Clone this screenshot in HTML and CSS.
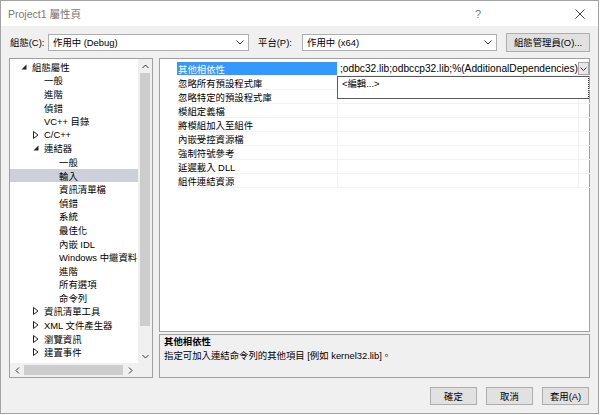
FILE: index.html
```html
<!DOCTYPE html>
<html>
<head>
<meta charset="utf-8">
<link rel="stylesheet" href="styles.css">
</head>
<body>
<div class="window">
  <div class="titlebar">
    <span class="title">Project1 屬性頁</span>
    <span class="tb-btn help">?</span>
    <span class="tb-btn close"><svg width="10" height="10" viewBox="0 0 10 10"><path d="M0.5 0.5 L9.5 9.5 M9.5 0.5 L0.5 9.5" stroke="#444" stroke-width="1" fill="none"/></svg></span>
  </div>
  <div class="content">
    <div class="toprow">
      <span class="lbl lbl1">組態(C):</span>
      <div class="combo combo1"><span>作用中 (Debug)</span><svg class="chev" width="8" height="5" viewBox="0 0 8 5"><path d="M0.5 0.5 L4 4 L7.5 0.5" stroke="#333" fill="none"/></svg></div>
      <span class="lbl lbl2">平台(P):</span>
      <div class="combo combo2"><span>作用中 (x64)</span><svg class="chev" width="8" height="5" viewBox="0 0 8 5"><path d="M0.5 0.5 L4 4 L7.5 0.5" stroke="#333" fill="none"/></svg></div>
      <button class="btn cfgbtn">組態管理員(O)...</button>
    </div>
    <div class="main">
      <div class="tree">
        <div class="tree-list">
          <div class="trow l0"><span class="arr"><svg width="6" height="6" viewBox="0 0 6 6"><path d="M5.5 0.5 L5.5 5.5 L0.5 5.5 Z" fill="#222"/></svg></span><span>組態屬性</span></div>
          <div class="trow l1"><span class="arr"></span><span>一般</span></div>
          <div class="trow l1"><span class="arr"></span><span>進階</span></div>
          <div class="trow l1"><span class="arr"></span><span>偵錯</span></div>
          <div class="trow l1"><span class="arr"></span><span>VC++ 目錄</span></div>
          <div class="trow l1c"><span class="arr"><svg width="6" height="8" viewBox="0 0 6 8"><path d="M0.5 0.5 L5 4 L0.5 7.5 Z" fill="none" stroke="#222"/></svg></span><span>C/C++</span></div>
          <div class="trow l1c"><span class="arr"><svg width="6" height="6" viewBox="0 0 6 6"><path d="M5.5 0.5 L5.5 5.5 L0.5 5.5 Z" fill="#222"/></svg></span><span>連結器</span></div>
          <div class="trow l2"><span class="arr"></span><span>一般</span></div>
          <div class="trow l2 sel"><span class="arr"></span><span>輸入</span></div>
          <div class="trow l2"><span class="arr"></span><span>資訊清單檔</span></div>
          <div class="trow l2"><span class="arr"></span><span>偵錯</span></div>
          <div class="trow l2"><span class="arr"></span><span>系統</span></div>
          <div class="trow l2"><span class="arr"></span><span>最佳化</span></div>
          <div class="trow l2"><span class="arr"></span><span>內嵌 IDL</span></div>
          <div class="trow l2"><span class="arr"></span><span>Windows 中繼資料</span></div>
          <div class="trow l2"><span class="arr"></span><span>進階</span></div>
          <div class="trow l2"><span class="arr"></span><span>所有選項</span></div>
          <div class="trow l2"><span class="arr"></span><span>命令列</span></div>
          <div class="trow l1c"><span class="arr"><svg width="6" height="8" viewBox="0 0 6 8"><path d="M0.5 0.5 L5 4 L0.5 7.5 Z" fill="none" stroke="#222"/></svg></span><span>資訊清單工具</span></div>
          <div class="trow l1c"><span class="arr"><svg width="6" height="8" viewBox="0 0 6 8"><path d="M0.5 0.5 L5 4 L0.5 7.5 Z" fill="none" stroke="#222"/></svg></span><span>XML 文件產生器</span></div>
          <div class="trow l1c"><span class="arr"><svg width="6" height="8" viewBox="0 0 6 8"><path d="M0.5 0.5 L5 4 L0.5 7.5 Z" fill="none" stroke="#222"/></svg></span><span>瀏覽資訊</span></div>
          <div class="trow l1c"><span class="arr"><svg width="6" height="8" viewBox="0 0 6 8"><path d="M0.5 0.5 L5 4 L0.5 7.5 Z" fill="none" stroke="#222"/></svg></span><span>建置事件</span></div>
        </div>
        <div class="vscroll">
          <div class="sarrow"><svg width="7" height="5" viewBox="0 0 7 5"><path d="M0.5 4 L3.5 1 L6.5 4" stroke="#333" fill="none"/></svg></div>
          <div class="vthumb"></div>
          <div class="vtrack"></div>
          <div class="sarrow"><svg width="7" height="5" viewBox="0 0 7 5"><path d="M0.5 1 L3.5 4 L6.5 1" stroke="#333" fill="none"/></svg></div>
        </div>
        <div class="hscroll">
          <div class="harrow"><svg width="5" height="7" viewBox="0 0 5 7"><path d="M4 0.5 L1 3.5 L4 6.5" stroke="#333" fill="none"/></svg></div>
          <div class="hthumb"></div>
          <div class="harrow"><svg width="5" height="7" viewBox="0 0 5 7"><path d="M1 0.5 L4 3.5 L1 6.5" stroke="#333" fill="none"/></svg></div>
        </div>
        <div class="corner"></div>
      </div>
      <div class="rightcol">
        <div class="grid">
          <div class="gutter"></div>
          <div class="rows">
            <div class="grow"><div class="gname gsel">其他相依性</div><div class="gval gedit">;odbc32.lib;odbccp32.lib;%(AdditionalDependencies)</div><div class="gend"><span class="ddbtn"><svg width="7" height="4" viewBox="0 0 7 4"><path d="M0.5 0.5 L3.5 3.5 L6.5 0.5" stroke="#333" fill="none"/></svg></span></div></div>
            <div class="grow"><div class="gname">忽略所有預設程式庫</div><div class="gval"></div><div class="gend"></div></div>
            <div class="grow"><div class="gname">忽略特定的預設程式庫</div><div class="gval"></div><div class="gend"></div></div>
            <div class="grow"><div class="gname">模組定義檔</div><div class="gval"></div><div class="gend"></div></div>
            <div class="grow"><div class="gname">將模組加入至組件</div><div class="gval"></div><div class="gend"></div></div>
            <div class="grow"><div class="gname">內嵌受控資源檔</div><div class="gval"></div><div class="gend"></div></div>
            <div class="grow"><div class="gname">強制符號參考</div><div class="gval"></div><div class="gend"></div></div>
            <div class="grow"><div class="gname">延遲載入 DLL</div><div class="gval"></div><div class="gend"></div></div>
            <div class="grow"><div class="gname">組件連結資源</div><div class="gval"></div><div class="gend"></div></div>
          </div>
          <div class="popup"><span>&lt;編輯...&gt;</span></div>
        </div>
        <div class="desc">
          <div class="desc-title">其他相依性</div>
          <div class="desc-text">指定可加入連結命令列的其他項目 [例如 kernel32.lib]。</div>
        </div>
      </div>
    </div>
    <div class="buttons">
      <button class="btn dbtn">確定</button>
      <button class="btn dbtn">取消</button>
      <button class="btn dbtn">套用(A)</button>
    </div>
  </div>
</div>
</body>
</html>
```
FILE: styles.css
```css
* { box-sizing: border-box; }
html, body { margin: 0; padding: 0; }
body {
  width: 600px;
  height: 415px;
  background: #ffffff;
  font-family: "Liberation Sans", "Noto Sans CJK TC", sans-serif;
  font-size: 9.4px;
  color: #000;
  overflow: hidden;
}
.window {
  width: 599px;
  height: 414px;
  border: 1px solid #a3a3a3;
  background: #f0f0f0;
  display: flex;
  flex-direction: column;
}
.titlebar {
  height: 25px;
  background: #ffffff;
  display: flex;
  align-items: center;
  padding-left: 7px;
  padding-right: 3px;
}
.title {
  font-size: 10.5px;
  color: #777777;
  flex: 1;
}
.tb-btn {
  width: 30px;
  display: flex;
  justify-content: center;
  align-items: center;
  color: #777;
  font-size: 11px;
}
.help { margin-right: 72px; }
.content {
  flex: 1;
  padding: 0 7px 0 8px;
  display: flex;
  flex-direction: column;
}
.toprow {
  margin-top: 6px;
  height: 20px;
  display: flex;
  align-items: center;
}
.lbl { flex: none; }
.lbl1 { width: 39px; padding-left: 1px; }
.lbl2 { width: 44px; margin-left: 9px; }
.combo {
  height: 17px;
  border: 1px solid #adadad;
  background: #ffffff;
  display: flex;
  align-items: center;
  padding-left: 4px;
  padding-right: 4px;
}
.combo span { flex: 1; }
.combo1 { width: 201px; }
.combo2 { width: 195px; }
.btn {
  font-family: "Liberation Sans", "Noto Sans CJK TC", sans-serif;
  font-size: 9.4px;
  color: #000;
  background: #e1e1e1;
  border: 1px solid #adadad;
  padding: 0;
  margin: 0;
}
.cfgbtn {
  margin-left: 9px;
  width: 84px;
  height: 19px;
}
.main {
  margin-top: 6px;
  height: 320px;
  display: flex;
}
.tree {
  width: 144px;
  height: 320px;
  border: 1px solid #a0a0a0;
  background: #ffffff;
  display: grid;
  grid-template-columns: 1fr 14px;
  grid-template-rows: 1fr 14px;
}
.tree-list {
  overflow: hidden;
  padding-top: 1px;
}
.trow {
  height: 13.6px;
  display: flex;
  align-items: center;
  white-space: nowrap;
}
.arr {
  width: 13px;
  flex: none;
  display: flex;
  align-items: center;
}
.l0 { padding-left: 9px; }
.l0 .arr { padding-left: 2px; }
.l1 { padding-left: 21px; }
.l1c { padding-left: 21px; }
.l1c .arr { padding-left: 2px; }
.l2 { padding-left: 36px; }
.sel { background: #cdcfdb; }
.vscroll {
  background: #f0f0f0;
  display: flex;
  flex-direction: column;
}
.sarrow {
  height: 14px;
  display: flex;
  align-items: center;
  justify-content: center;
  flex: none;
}
.vthumb {
  height: 253px;
  margin: 0 2px;
  background: #cdcdcd;
}
.vtrack { flex: 1; }
.hscroll {
  background: #f0f0f0;
  display: flex;
  align-items: center;
}
.harrow {
  width: 14px;
  height: 14px;
  display: flex;
  align-items: center;
  justify-content: center;
  flex: none;
}
.hthumb {
  width: 99px;
  height: 10px;
  background: #cdcdcd;
}
.corner { background: #f0f0f0; }
.rightcol {
  margin-left: 6px;
  width: 431px;
  display: flex;
  flex-direction: column;
}
.grid {
  position: relative;
  height: 274px;
  border: 1px solid #a0a0a0;
  background: #ffffff;
  display: flex;
  padding-top: 3px;
}
.gutter { width: 17px; flex: none; }
.rows { flex: 1; }
.grow {
  height: 14px;
  display: flex;
  border-bottom: 1px solid #f2f2f2;
}
.gname {
  width: 161px;
  padding-left: 1px;
  display: flex;
  align-items: center;
  border-right: 1px solid #f2f2f2;
  white-space: nowrap;
}
.gsel {
  background: #3399ff;
  color: #ffffff;
}
.gval {
  flex: 1;
  display: flex;
  align-items: center;
  padding-left: 2px;
  white-space: nowrap;
  overflow: hidden;
}
.gedit { font-size: 10.2px; }
.gend {
  width: 12px;
  flex: none;
  border-left: 1px solid #f2f2f2;
  display: flex;
  align-items: center;
}
.ddbtn {
  width: 11px;
  height: 13px;
  margin-left: -1px;
  background: #e8e8e8;
  border: 1px solid #a8a8a8;
  display: flex;
  align-items: center;
  justify-content: center;
}
.popup {
  position: absolute;
  left: 177px;
  top: 17px;
  width: 252px;
  height: 23px;
  background: #ffffff;
  border: 1px solid #5a5a5a;
  border-right: 1px dotted #333;
  padding: 1px 4px;
  line-height: 12px;
}
.desc {
  margin-top: 2px;
  height: 44px;
  border: 1px solid #a0a0a0;
  background: #f0f0f0;
  padding: 0 4px;
}
.desc-title {
  height: 14px;
  line-height: 14px;
  font-weight: bold;
}
.desc-text {
  height: 14px;
  line-height: 14px;
}
.buttons {
  margin-top: 9px;
  height: 18px;
  display: flex;
  justify-content: flex-end;
  gap: 9px;
  padding-right: 2px;
}
.dbtn {
  width: 47px;
  height: 18px;
}
```
